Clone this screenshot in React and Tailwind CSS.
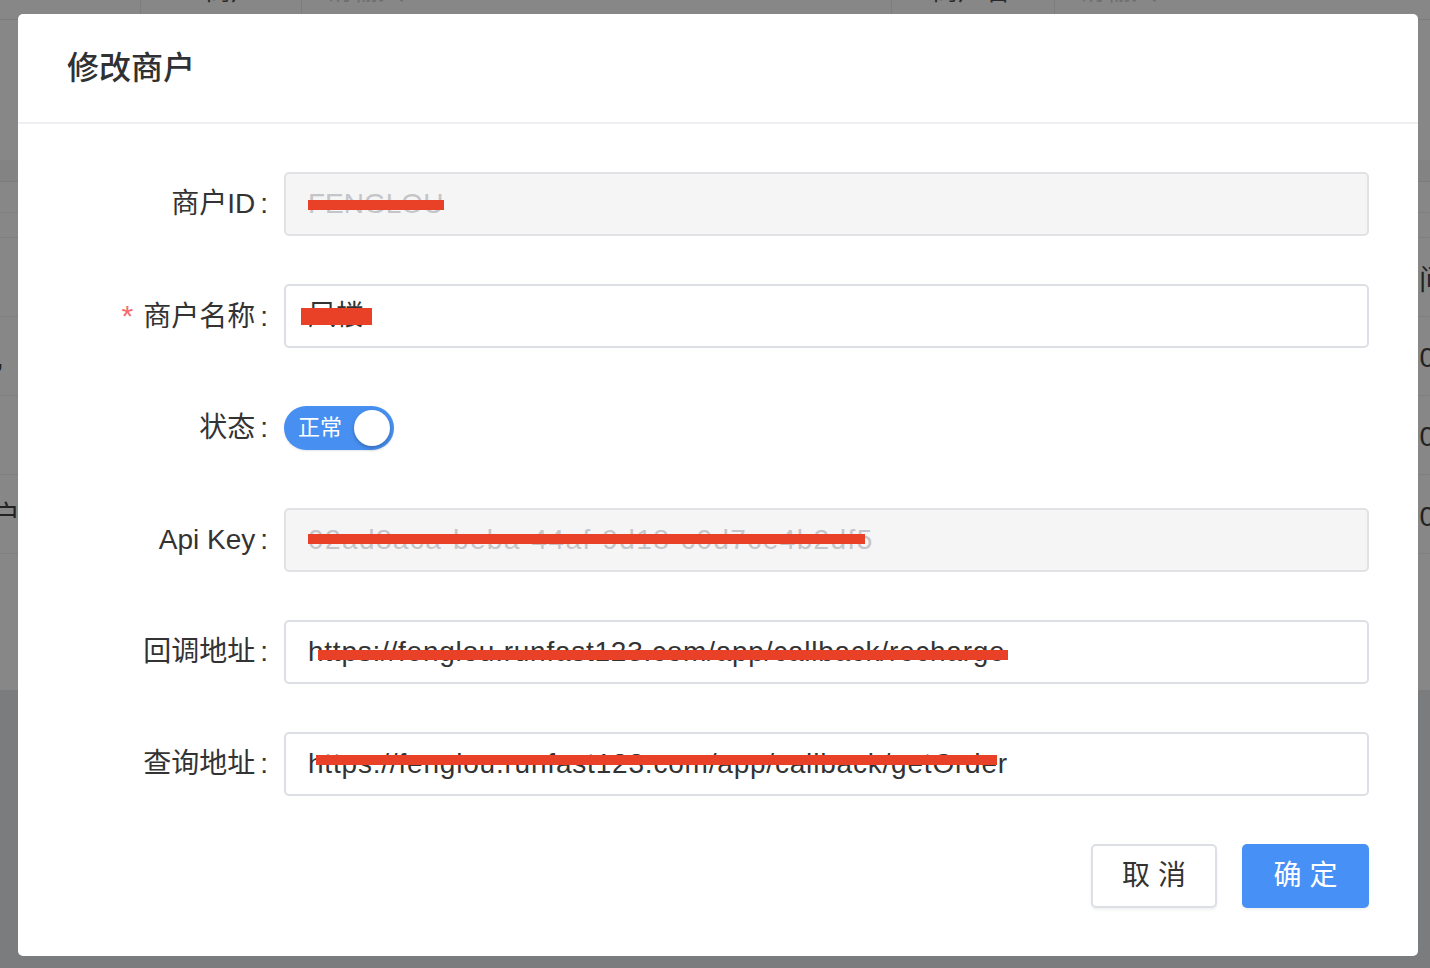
import React from "react";

const FONT = { fontFamily: '"Liberation Sans", "Noto Sans CJK SC", sans-serif' };

function Row({ label, required, children }) {
  return (
    <div className="flex items-center h-[64px]">
      <div className="w-[266px] shrink-0 pr-[16px] text-right text-[28px] leading-none text-[#333333]">
        {required && <span className="text-[#f56c6c] mr-[10px] text-[30px]">*</span>}
        {label}
        <span className="ml-[5px]">:</span>
      </div>
      <div className="flex-1">{children}</div>
    </div>
  );
}

function Input({ value, disabled, bar, track }) {
  return (
    <div
      className={
        "relative h-[64px] w-full rounded-[5px] border-2 flex items-center pl-[22px] text-[28px] leading-none whitespace-nowrap overflow-hidden " +
        (disabled
          ? "bg-[#f5f5f6] border-[#e1e2e5] text-[#c4c5c8]"
          : "bg-white border-[#dcdfe4] text-[#333333]")
      }
    >
      <span style={{ letterSpacing: track }}>{value}</span>
      {bar && (
        <span
          className="absolute bg-[#e94128]"
          style={{ left: bar[0], top: bar[1], width: bar[2], height: bar[3] }}
        />
      )}
    </div>
  );
}

export default function App() {
  return (
    <div className="relative w-[1430px] h-[968px] overflow-hidden bg-[#878787]" style={FONT}>
      {/* background page (dimmed) */}
      <div className="flex flex-col h-full">
        <div className="h-[20px] flex border-b border-[#7d7d7d] text-[26px] leading-none">
          <div className="w-[141px] border-r border-[#7d7d7d]" />
          <div className="w-[161px] border-r border-[#7d7d7d] relative overflow-hidden">
            <span className="absolute left-[64px] -top-[22px] text-[#2a2a2a]">商户ID</span>
          </div>
          <div className="w-[590px] border-r border-[#7d7d7d] relative overflow-hidden">
            <span className="absolute left-[24px] -top-[22px] text-[#6e6e6e]">请输入</span>
          </div>
          <div className="w-[163px] border-r border-[#7d7d7d] relative overflow-hidden">
            <span className="absolute left-[40px] -top-[22px] text-[#2a2a2a]">商户名</span>
          </div>
          <div className="flex-1 relative overflow-hidden">
            <span className="absolute left-[24px] -top-[22px] text-[#6e6e6e]">请输入</span>
          </div>
        </div>
        <div className="h-[140px]" />
        <div className="h-[22px] bg-[#838383] border-b border-[#7c7c7c]" />
        <div className="h-[31px] border-b border-[#7f7f7f]" />
        <div className="h-[25px] border-b border-[#7f7f7f]" />
        <div className="h-[79px] border-b border-[#7f7f7f] flex items-center justify-end pt-[8px] text-[28px] text-[#222222] overflow-hidden">
          <span className="-mr-[17px]">问</span>
        </div>
        <div className="h-[79px] border-b border-[#7f7f7f] flex items-center justify-between pt-[4px] text-[28px] text-[#222222] overflow-hidden">
          <span className="-ml-[4px]">,</span>
          <span className="-mr-[5px]">0</span>
        </div>
        <div className="h-[79px] border-b border-[#7f7f7f] flex items-center justify-end pt-[4px] text-[28px] text-[#222222] overflow-hidden">
          <span className="-mr-[5px]">0</span>
        </div>
        <div className="h-[79px] border-b border-[#7f7f7f] flex items-center justify-between pt-[6px] text-[28px] text-[#222222] overflow-hidden">
          <span className="-ml-[8px]">户</span>
          <span className="-mr-[5px]">0</span>
        </div>
        <div className="h-[136px]" />
        <div className="flex-1 bg-[#7b7c7e]" />
      </div>

      {/* modal */}
      <div className="absolute left-[18px] top-[14px] w-[1400px] h-[942px] bg-white rounded-[5px] flex flex-col">
        <div className="h-[110px] shrink-0 border-b-2 border-[#eeeff2] flex items-center pl-[49px]">
          <span className="text-[32px] font-medium text-[#303133] leading-none">修改商户</span>
        </div>
        <div className="flex flex-col gap-[48px] pt-[48px] pr-[49px]">
          <Row label="商户ID">
            <Input value="FENGLOU" disabled bar={[22, 26, 136, 10]} />
          </Row>
          <Row label="商户名称" required>
            <Input value="凤楼" bar={[15, 22, 71, 17]} />
          </Row>
          <Row label="状态">
            <div className="relative w-[110px] h-[44px] rounded-full bg-[#4790f2] flex items-center pl-[14px] shadow-[0_1px_2px_rgba(0,0,0,0.1)]">
              <span className="text-white text-[22px] leading-none">正常</span>
              <span className="absolute right-[4px] top-[4px] w-[36px] h-[36px] rounded-full bg-white shadow-[0_2px_4px_rgba(0,0,0,0.25)]" />
            </div>
          </Row>
          <Row label="Api Key">
            <Input value="02ad8aca-beba-44af-9d18-c0d7ce4b2df5" disabled bar={[22, 24, 557, 10]} track="1.4px" />
          </Row>
          <Row label="回调地址">
            <Input value="https://fenglou.runfast123.com/app/callback/recharge" bar={[32, 28, 690, 10]} track="0.75px" />
          </Row>
          <Row label="查询地址">
            <Input value="https://fenglou.runfast123.com/app/callback/getOrder" bar={[30, 21, 681, 10]} track="0.8px" />
          </Row>
        </div>
        <div className="flex justify-end gap-[25px] pt-[48px] pr-[49px]">
          <button className="w-[126px] h-[64px] rounded-[5px] border-2 border-[#dcdfe4] bg-white text-[28px] text-[#333333] leading-none shadow-[0_2px_3px_rgba(0,0,0,0.06)]">
            取 消
          </button>
          <button className="w-[127px] h-[64px] rounded-[5px] bg-[#4790f6] text-[28px] text-white leading-none shadow-[0_2px_3px_rgba(0,0,0,0.06)]">
            确 定
          </button>
        </div>
      </div>
    </div>
  );
}
